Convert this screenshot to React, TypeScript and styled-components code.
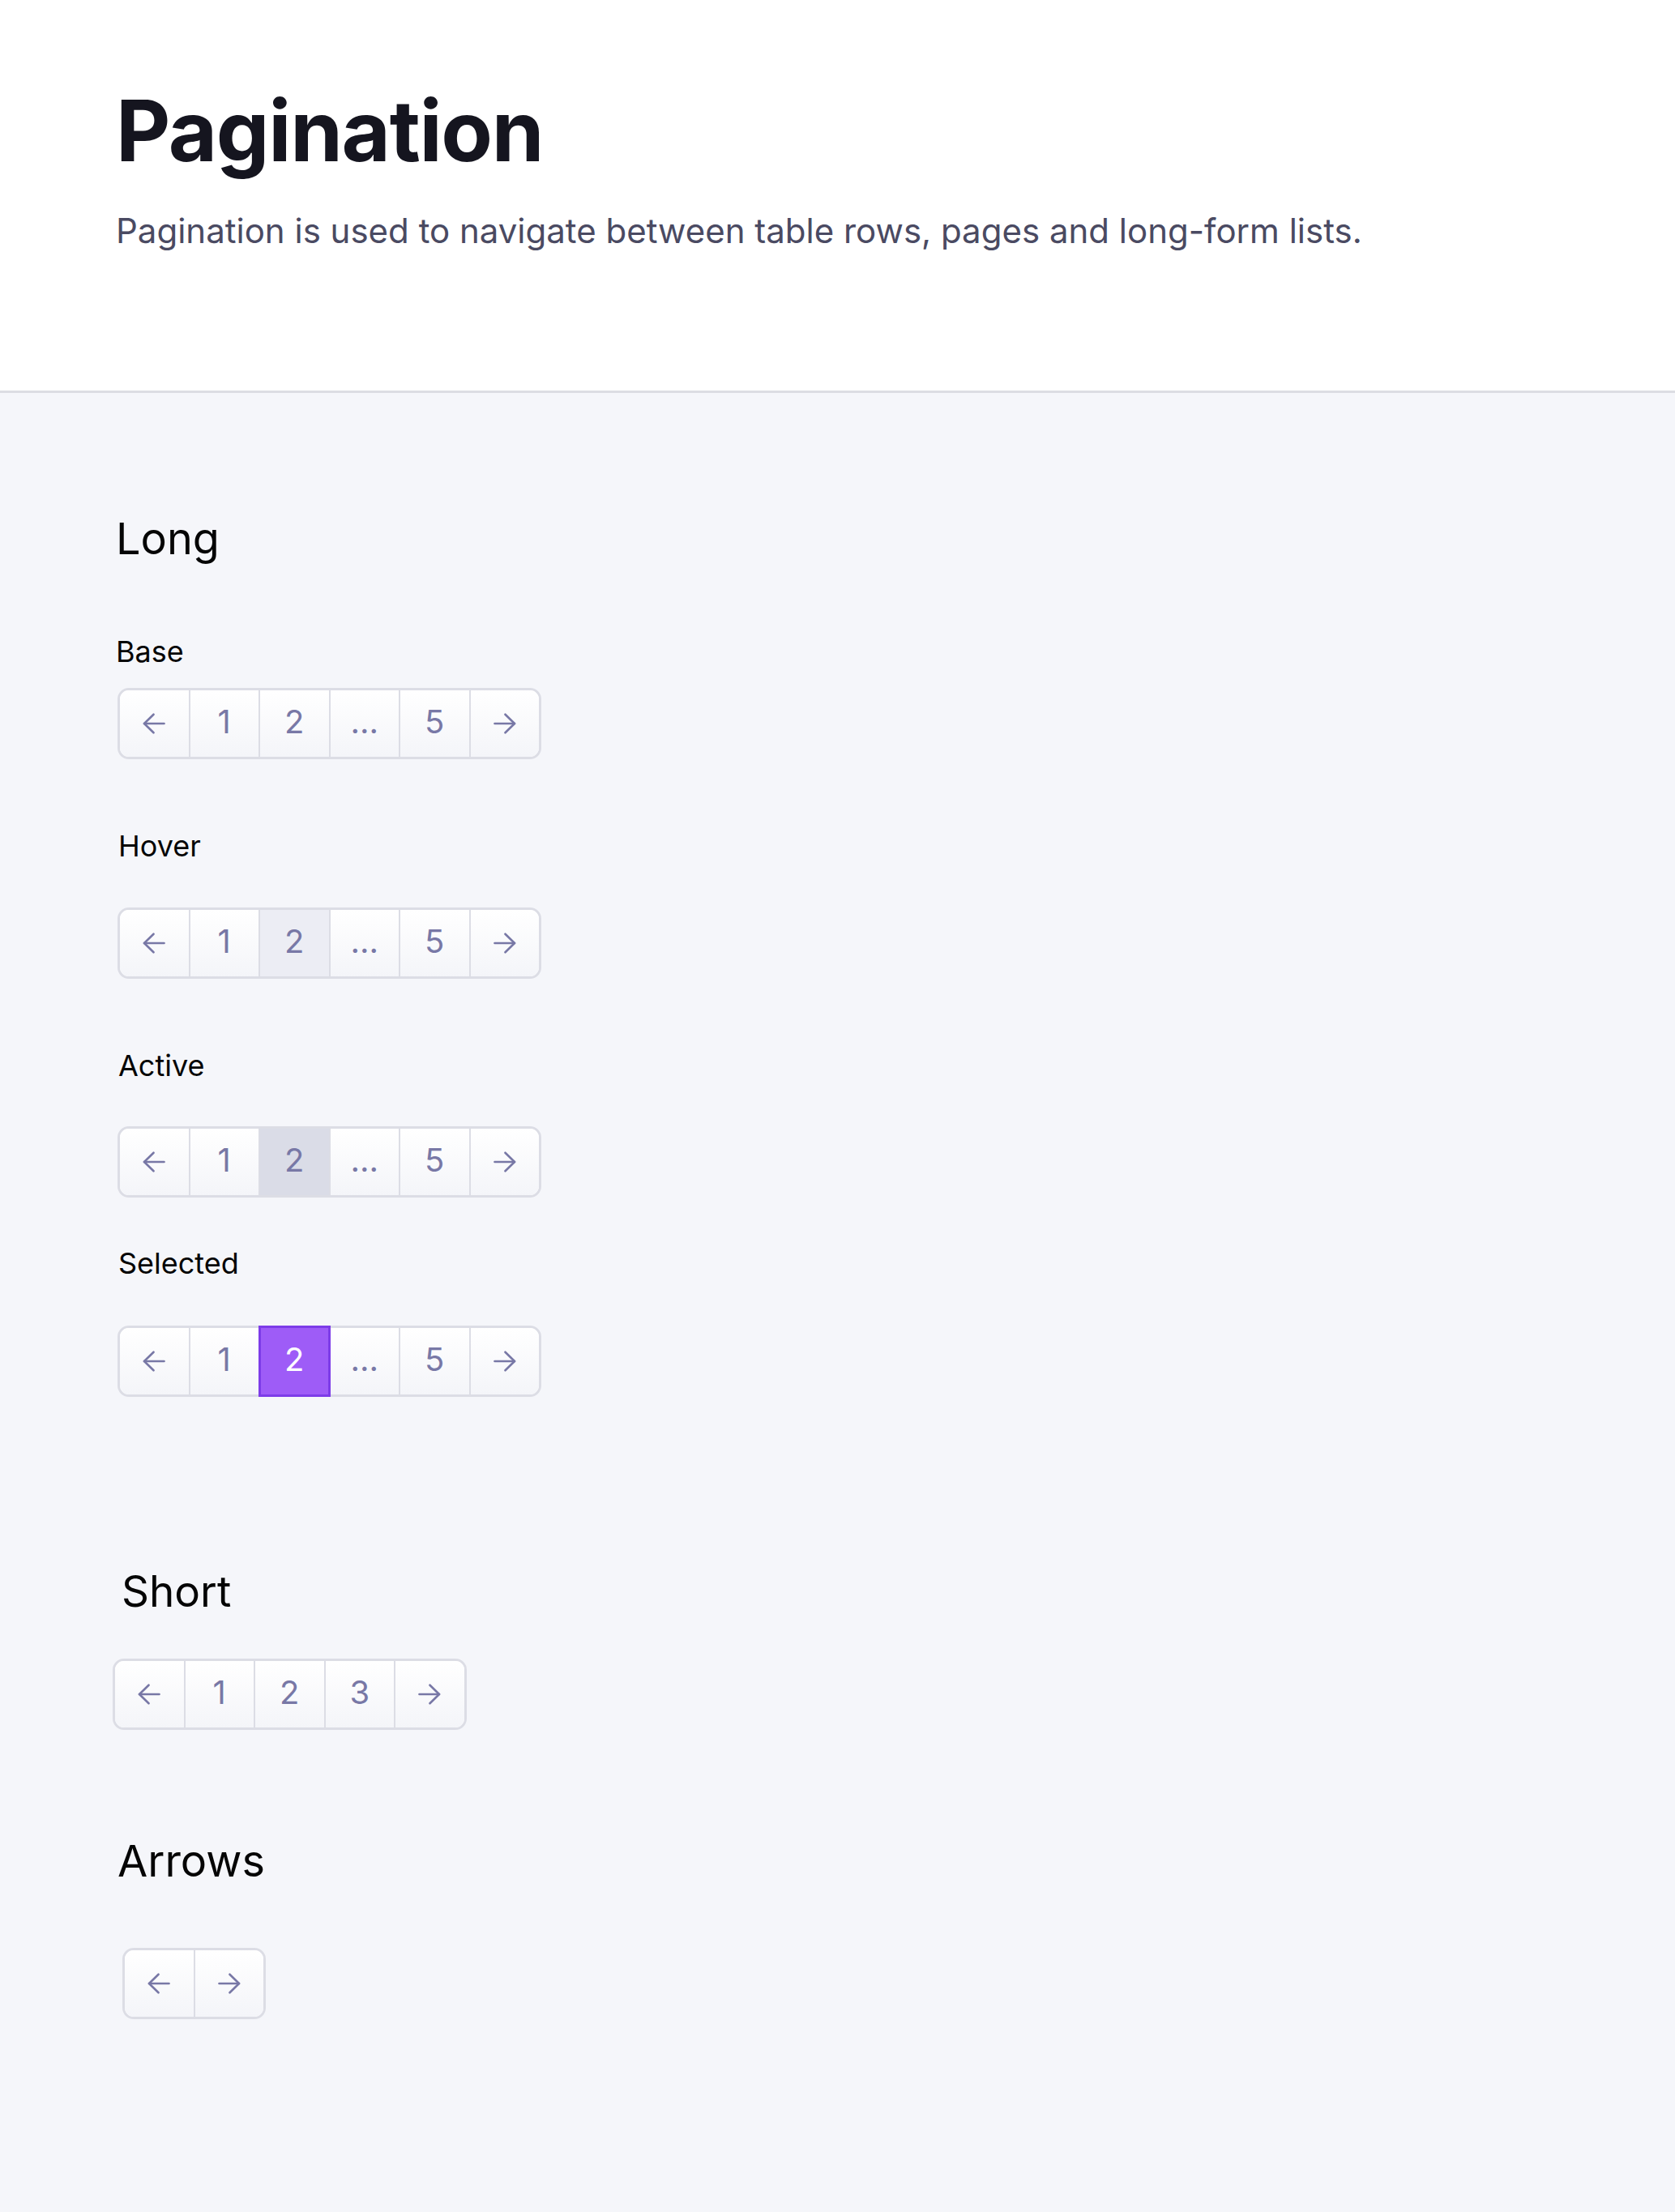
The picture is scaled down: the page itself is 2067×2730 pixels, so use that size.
import React from 'react';
import styled, { createGlobalStyle, css } from 'styled-components';

const GlobalStyle = createGlobalStyle`
  html, body {
    margin: 0;
    padding: 0;
    background: #f5f6fa;
  }
  body {
    font-family: Inter, "Noto Sans", "Liberation Sans", sans-serif;
    -webkit-font-smoothing: antialiased;
  }
  * { box-sizing: border-box; }
`;

const Page = styled.div`
  min-height: 2730px;
  background: #f5f6fa;
  display: flex;
  flex-direction: column;
`;

const Header = styled.header`
  background: #ffffff;
  padding: 109px 0 176px 143px;
  border-bottom: 3px solid #dcdde3;
`;

const Title = styled.h1`
  margin: 0;
  font-size: 104px;
  line-height: 1;
  font-weight: 700;
  color: #15151f;
  letter-spacing: -1.3px;
`;

const Lead = styled.p`
  margin: 51px 0 0;
  font-size: 42px;
  line-height: 1;
  font-weight: 400;
  color: #4a4a62;
`;

const Content = styled.main`
  display: flex;
  flex-direction: column;
  align-items: flex-start;
  padding: 0 0 0 145px;
`;

const Heading = styled.h2<{ $mt: number; $shift?: number; $size?: number }>`
  margin: ${p => p.$mt}px 0 0 ${p => p.$shift ?? 0}px;
  font-size: ${p => p.$size ?? 54}px;
  line-height: 1;
  font-weight: 400;
  color: #050505;
`;

const Label = styled.div<{ $mt: number; $shift?: number }>`
  margin: ${p => p.$mt}px 0 0 ${p => p.$shift ?? 0}px;
  font-size: 36px;
  line-height: 33px;
  font-weight: 400;
  color: #050505;
`;

const Bar = styled.nav<{ $mt: number; $shift?: number }>`
  margin: ${p => p.$mt}px 0 0 ${p => p.$shift ?? 0}px;
  display: flex;
  border: 3px solid #dcdde5;
  border-radius: 14px;
  background: #ffffff;
`;

type CellState = 'base' | 'hover' | 'active' | 'selected';

const Cell = styled.button<{ $state: CellState; $icon?: boolean }>`
  appearance: none;
  box-sizing: content-box;
  margin: 0;
  padding: 0 0 ${p => (p.$icon ? 0 : 5)}px;
  border: 0;
  position: relative;
  width: 84.5px;
  height: ${p => (p.$icon ? 82 : 77)}px;
  display: flex;
  align-items: center;
  justify-content: center;
  font-family: inherit;
  font-size: 40px;
  line-height: 1;
  font-weight: 400;
  color: #7878a6;
  background: linear-gradient(180deg, #ffffff 0%, #f4f5f9 100%);
  cursor: pointer;

  & + & {
    border-left: 2px solid #dcdde5;
  }
  &:first-child {
    border-radius: 11px 0 0 11px;
  }
  &:last-child {
    border-radius: 0 11px 11px 0;
  }

  ${p =>
    p.$state === 'hover' &&
    css`
      background: #ecedf4;
    `}
  ${p =>
    p.$state === 'active' &&
    css`
      background: #dadce7;
    `}
  ${p =>
    p.$state === 'selected' &&
    css`
      z-index: 1;
      color: #ffffff;
      &::before {
        content: '';
        position: absolute;
        top: -3px;
        bottom: -3px;
        left: -2px;
        right: -2px;
        background: #9e5cf7;
        border: 3px solid #7d3ce8;
      }
    `}
`;

const CellText = styled.span`
  position: relative;
  display: flex;
  align-items: center;
  justify-content: center;
`;

const ArrowIcon: React.FC<{ dir: 'left' | 'right' }> = ({ dir }) => (
  <svg
    width="28"
    height="26"
    viewBox="0 0 28 26"
    fill="none"
    stroke="currentColor"
    strokeWidth="2.6"
    strokeLinecap="round"
    strokeLinejoin="round"
    style={{ transform: dir === 'right' ? 'scaleX(-1)' : undefined }}
  >
    <path d="M26.5 13H2" />
    <path d="M13.5 1.7L2 13L13.5 24.3" />
  </svg>
);

type Item = { key: string; content: React.ReactNode; icon?: boolean };

const longItems: Item[] = [
  { key: 'prev', content: <ArrowIcon dir="left" />, icon: true },
  { key: '1', content: '1' },
  { key: '2', content: '2' },
  { key: 'gap', content: '...' },
  { key: '5', content: '5' },
  { key: 'next', content: <ArrowIcon dir="right" />, icon: true },
];

const shortItems: Item[] = [
  { key: 'prev', content: <ArrowIcon dir="left" />, icon: true },
  { key: '1', content: '1' },
  { key: '2', content: '2' },
  { key: '3', content: '3' },
  { key: 'next', content: <ArrowIcon dir="right" />, icon: true },
];

const arrowItems: Item[] = [
  { key: 'prev', content: <ArrowIcon dir="left" />, icon: true },
  { key: 'next', content: <ArrowIcon dir="right" />, icon: true },
];

const Pagination: React.FC<{
  items: Item[];
  mt: number;
  shift?: number;
  highlight?: string;
  state?: CellState;
}> = ({ items, mt, shift, highlight, state = 'base' }) => (
  <Bar $mt={mt} $shift={shift} aria-label="Pagination">
    {items.map(it => (
      <Cell key={it.key} $icon={it.icon} $state={it.key === highlight ? state : 'base'}>
        <CellText>{it.content}</CellText>
      </Cell>
    ))}
  </Bar>
);

export default function App() {
  return (
    <Page>
      <GlobalStyle />
      <Header>
        <Title>Pagination</Title>
        <Lead>Pagination is used to navigate between table rows, pages and long-form lists.</Lead>
      </Header>
      <Content>
        <Heading $mt={153} $shift={-2}>Long</Heading>

        <Label $mt={96} $shift={-2}>Base</Label>
        <Pagination items={longItems} mt={28} />

        <Label $mt={91} $shift={1}>Hover</Label>
        <Pagination items={longItems} mt={59} highlight="2" state="hover" />

        <Label $mt={91} $shift={1}>Active</Label>
        <Pagination items={longItems} mt={58} highlight="2" state="active" />

        <Label $mt={65} $shift={1}>Selected</Label>
        <Pagination items={longItems} mt={60} highlight="2" state="selected" />

        <Heading $mt={214} $shift={5} $size={53}>Short</Heading>
        <Pagination items={shortItems} mt={56} shift={-6} />

        <Heading $mt={135} $shift={0}>Arrows</Heading>
        <Pagination items={arrowItems} mt={80} shift={6} />
      </Content>
    </Page>
  );
}
